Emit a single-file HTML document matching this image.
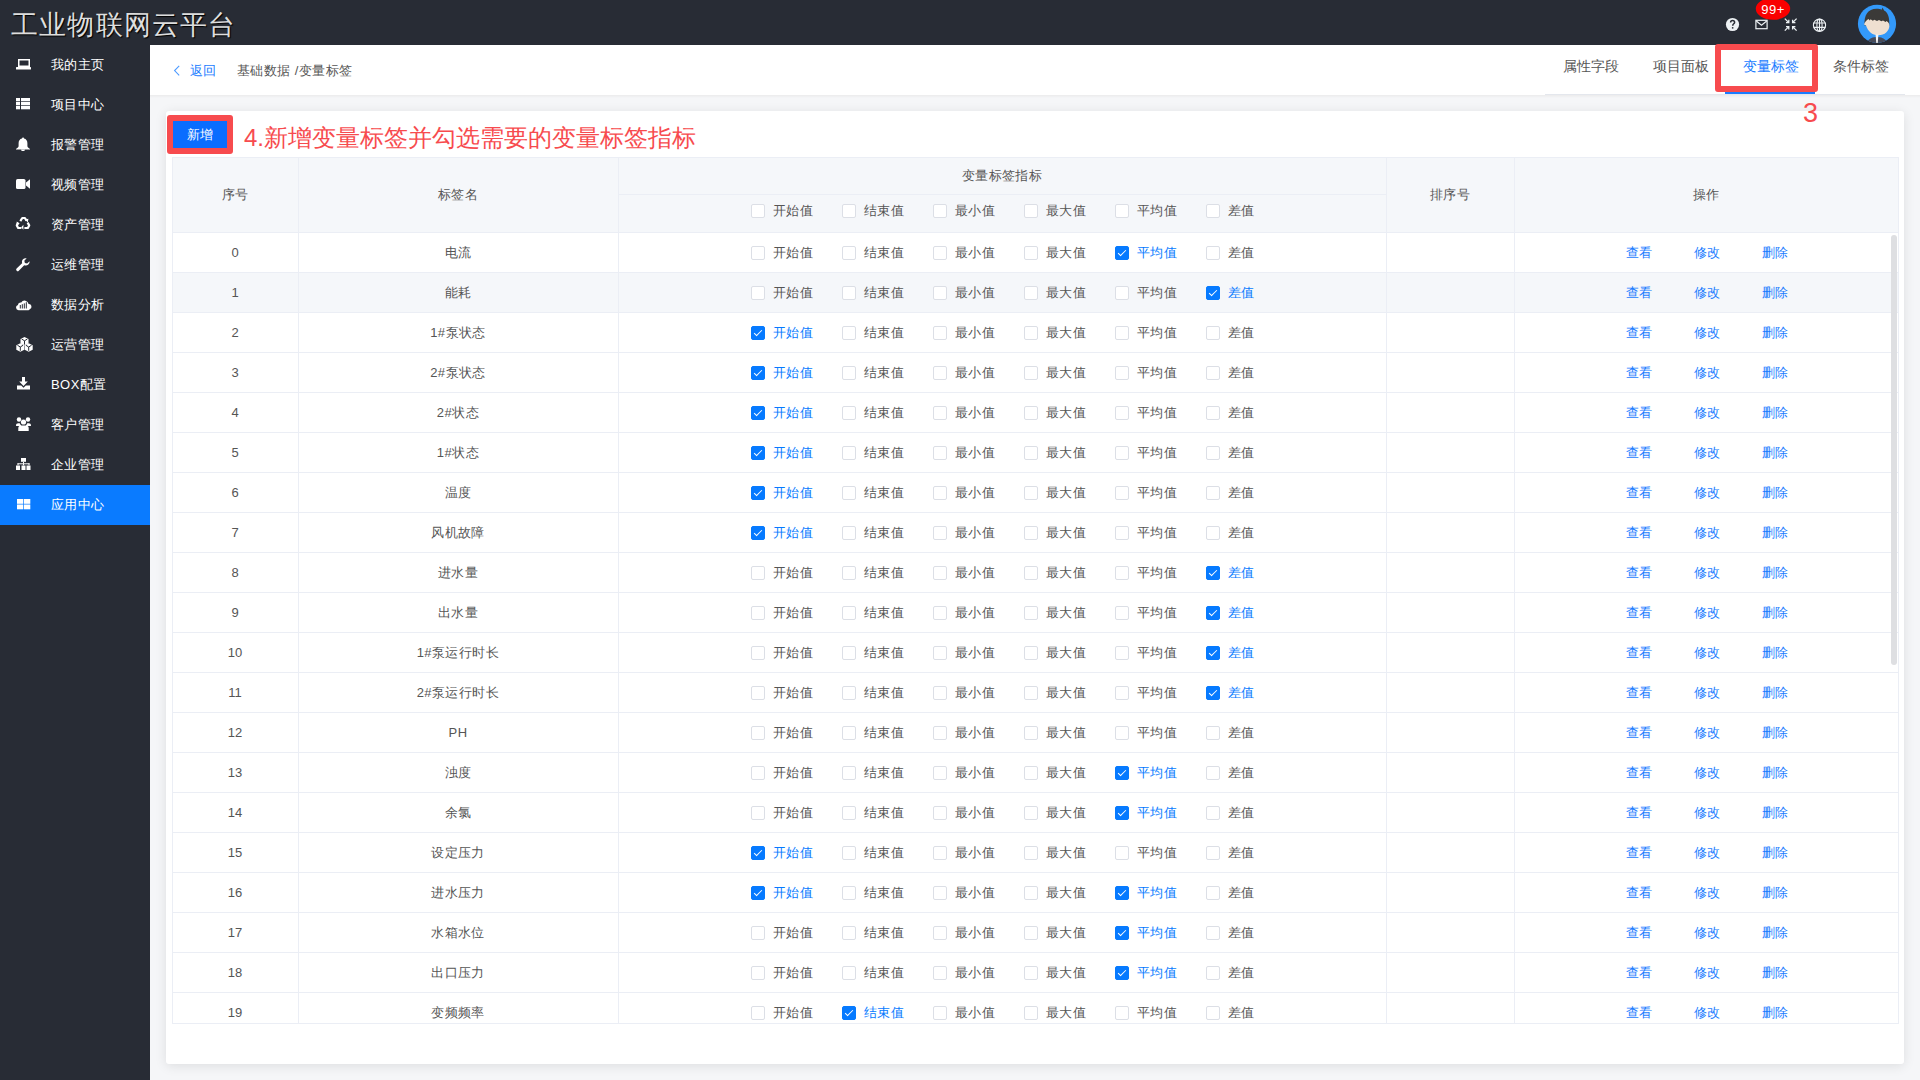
<!DOCTYPE html>
<html><head><meta charset="utf-8">
<style>
*{box-sizing:border-box;margin:0;padding:0}
html,body{width:1920px;height:1080px;overflow:hidden;background:#f5f6f8;font-family:"Liberation Sans",sans-serif;position:relative}
#top{position:absolute;left:0;top:0;width:1920px;height:45px;background:#282c35}
#title{position:absolute;left:11px;top:6px;font-family:"Liberation Serif",serif;font-size:27px;letter-spacing:1.2px;color:#dedede;line-height:38px;text-shadow:1px 1px 1px #000;white-space:nowrap}
#badge{position:absolute;left:1756px;top:2px;width:34px;line-height:16px;font-size:13px;letter-spacing:.45px;color:#fff;text-align:center}
#side{position:absolute;left:0;top:45px;width:150px;height:1035px;background:#282c35}
.mi{position:absolute;left:0;width:150px;height:40px}
.mi.act{background:#0a7bff}
.mi .mt{position:absolute;left:51px;top:0;line-height:39px;font-size:13px;letter-spacing:.45px;color:#fff;white-space:nowrap}
#hdr{position:absolute;left:150px;top:45px;width:1770px;height:50px;background:#fff}
#hdrsh{position:absolute;left:150px;top:95px;width:1770px;height:3px;background:linear-gradient(#ebebec,#f5f6f8)}
.back{position:absolute;left:190px;top:45px;line-height:51px;font-size:13px;letter-spacing:.45px;color:#1a7cff}
.crumb{position:absolute;left:237px;top:45px;line-height:51px;font-size:13px;letter-spacing:.45px;color:#555;white-space:nowrap}
.tab{position:absolute;top:45px;line-height:43px;font-size:14px;color:#555;white-space:nowrap}
.tab.on{color:#1a7cff}
#tabline{position:absolute;left:1545px;top:94px;width:360px;height:1px;background:#e4e7ed}
#tabbar{position:absolute;left:1725px;top:92px;width:90px;height:2px;background:#1a7cff}
.redbox{position:absolute;border:6px solid #f74b4e;border-radius:3px}
#card{position:absolute;left:166px;top:111px;width:1738px;height:953px;background:#fff;border-radius:3px;box-shadow:0 2px 12px rgba(0,0,0,.1)}
#btn{position:absolute;left:173px;top:121px;width:54px;height:27px;background:#0a6dff;color:#fff;font-size:13px;letter-spacing:.45px;line-height:28px;text-align:center}
#ann{position:absolute;left:244px;top:122px;line-height:32px;font-size:24px;color:#f74b4e;white-space:nowrap}
#three{position:absolute;left:1803px;top:96px;line-height:34px;font-size:27px;color:#f74b4e}
#thead{position:absolute;left:172px;top:157px;width:1726px;height:76px;background:#f5f7fa}
#clip{position:absolute;left:0;top:232px;width:1920px;height:791px;overflow:hidden}
#rows{position:absolute;left:0;top:-232px;width:1920px;height:1100px}
.row{position:absolute;left:172px;width:1726px;height:40px;border-bottom:1px solid #ebeef5;background:#fff}
.row.hov{background:#f5f7fa}
.vl{position:absolute;width:1px;background:#ebeef5}
.hl{position:absolute;height:1px;background:#ebeef5}
.th{position:absolute;font-size:13px;letter-spacing:.45px;color:#555;line-height:22px;text-align:center}
.c1{position:absolute;left:172px;width:126px;line-height:41px;font-size:13px;color:#555;text-align:center}
.c2{position:absolute;left:298px;width:320px;line-height:42px;font-size:13px;letter-spacing:.45px;color:#555;text-align:center}
.cb{position:absolute;height:14px;white-space:nowrap}
.cb i{position:absolute;left:0;top:0;width:14px;height:14px;border:1px solid #dcdfe6;border-radius:2px;background:#fff}
.cb b{position:absolute;left:22px;top:-3px;font-weight:normal;font-size:13px;letter-spacing:.45px;line-height:20px;color:#555}
.cb.on i{background:#067aff;border-color:#067aff}
.cb.on i:after{content:"";position:absolute;left:4px;top:1px;width:3px;height:7px;border:1px solid #fff;border-left:0;border-top:0;transform:rotate(45deg)}
.cb.on b{color:#067aff}
.op{position:absolute;line-height:42px;font-size:13px;letter-spacing:.45px;color:#1a7cff}
#sb{position:absolute;left:1891px;top:235px;width:6px;height:430px;border-radius:3px;background:#dedfe2}
</style></head><body>
<div id="top"></div>
<div id="title">工业物联网云平台</div>
<svg style="position:absolute;left:1700px;top:0" width="220" height="45" viewBox="1700 0 220 45">
<circle cx="1732.5" cy="24.5" r="6.6" fill="#edf1f4"/>
<path d="M1730.6 22.6c0-1.2.9-2 2-2s2 .8 2 1.8c0 1.3-1.8 1.5-1.8 2.9v.5" fill="none" stroke="#282c35" stroke-width="1.5"/>
<rect x="1731.9" y="27.1" width="1.5" height="1.5" fill="#282c35"/>
<rect x="1755.9" y="20.3" width="11.2" height="8.4" fill="none" stroke="#edf1f4" stroke-width="1.2"/>
<path d="M1756.3 21l5.2 4.2 5.2-4.2" fill="none" stroke="#edf1f4" stroke-width="1.2"/>
<g fill="none" stroke="#edf1f4" stroke-width="1.3">
<path d="M1784.8 18.6l4 4M1788.8 19.8v2.8h-2.8"/>
<path d="M1796.6 18.6l-4 4M1792.6 19.8v2.8h2.8"/>
<path d="M1784.8 30.6l4-4M1788.8 29.4v-2.8h-2.8"/>
<path d="M1796.6 30.6l-4-4M1792.6 29.4v-2.8h2.8"/>
</g>
<g fill="none" stroke="#edf1f4" stroke-width="1.1">
<circle cx="1819.5" cy="25.2" r="6.1"/>
<ellipse cx="1819.5" cy="25.2" rx="2.6" ry="6.1"/>
<path d="M1813.6 23h11.8M1813.6 27.4h11.8M1819.5 19v12.4"/>
</g>
<ellipse cx="1773" cy="8.8" rx="17.2" ry="11" fill="#f90000"/>
<defs><clipPath id="av"><circle cx="1877" cy="23.8" r="19.1"/></clipPath></defs>
<circle cx="1877" cy="23.8" r="19.1" fill="#3399fa"/>
<g clip-path="url(#av)">
<path d="M1864.6 25.5C1863.8 15 1868 9 1876.5 8.8c2.2 0 4 .4 5.2 1l.8-2.2 1.6 2.8c3.8 2 5.6 6.5 5.2 15.6z" fill="#3b3a38"/>
<path d="M1864 24.5c.8-2.8 2.6-4.6 4.4-5.6l1.4 1.6.8-1.2 2.2 1.4 1.6-1 2.6 1.2 2-.9 2.4 1.2 1.6-.7 2.6 1.4 1-.8c1.8 1.2 2.8 2.6 2.8 4.6-.3 5.3-4.6 9.5-11.1 9.5-6.3 0-10.4-4-12.3-9.7z" fill="#efdfd0"/>
<path d="M1866 44c1.6-4.5 5-6.6 9.8-7h2.4c4.8.4 8.2 2.5 9.8 7z" fill="#474a58"/>
<path d="M1875.6 34.5h2.8l-.7 9h-1.4z" fill="#f4f4f4"/>
</g>
</svg>
<div id="badge">99+</div>
<div id="side"></div>
<div class="mi" style="top:45px"><span class="mt">我的主页</span></div><div class="mi" style="top:85px"><span class="mt">项目中心</span></div><div class="mi" style="top:125px"><span class="mt">报警管理</span></div><div class="mi" style="top:165px"><span class="mt">视频管理</span></div><div class="mi" style="top:205px"><span class="mt">资产管理</span></div><div class="mi" style="top:245px"><span class="mt">运维管理</span></div><div class="mi" style="top:285px"><span class="mt">数据分析</span></div><div class="mi" style="top:325px"><span class="mt">运营管理</span></div><div class="mi" style="top:365px"><span class="mt">BOX配置</span></div><div class="mi" style="top:405px"><span class="mt">客户管理</span></div><div class="mi" style="top:445px"><span class="mt">企业管理</span></div><div class="mi act" style="top:485px"><span class="mt">应用中心</span></div>
<svg style="position:absolute;left:0;top:0" width="150" height="530" viewBox="0 0 150 530" fill="#fff">
<!-- laptop -->
<rect x="18.75" y="59.75" width="10.5" height="6.5" fill="none" stroke="#fff" stroke-width="1.5"/>
<rect x="16" y="67" width="15" height="2.5" rx="0.5"/>
<!-- th-list -->
<rect x="16" y="98" width="4" height="3.3"/><rect x="21" y="98" width="9" height="3.3"/>
<rect x="16" y="102" width="4" height="3.3"/><rect x="21" y="102" width="9" height="3.3"/>
<rect x="16" y="106" width="4" height="3.3"/><rect x="21" y="106" width="9" height="3.3"/>
<!-- bell -->
<path d="M23 137.5c.6 0 1 .4 1 .9 2.3.5 3.4 2.3 3.4 4.8v2.8c0 1 .8 1.8 2.6 2.9v.6H16v-.6c1.8-1.1 2.6-1.9 2.6-2.9v-2.8c0-2.5 1.1-4.3 3.4-4.8 0-.5.4-.9 1-.9z"/>
<path d="M21 149.5h4c0 1-.9 1.6-2 1.6s-2-.6-2-1.6z"/>
<!-- video -->
<rect x="16" y="179" width="9.5" height="10" rx="1.6"/>
<path d="M26 182.5l4-3.3v9.6l-4-3.3z"/>
<!-- recycle -->
<g fill="none" stroke="#fff" stroke-width="2.2" stroke-linejoin="round">
<path d="M20.3 221.2l2-3.2h2.6l1.6 2.6"/>
<path d="M27.6 222.6l1.6 2.8-1.4 2.6h-3.4"/>
<path d="M21.4 228h-3.2l-1.4-2.6 1.6-2.8"/>
</g>
<path d="M25 219.4l3.4-.6-.6 3.6zM23.4 229.8l-2.2-2.6 2.2-2.4zM16.8 221.4l2.8 2.4-3.3 1z" fill="#fff"/>
<!-- wrench -->
<path d="M29.6 261.2l-2.5 2.4-2.2-.6-.6-2.2 2.4-2.5a3.8 3.8 0 0 0-4.6 4.9l-5.5 5.4a1.5 1.5 0 0 0 2.2 2.1l5.4-5.5a3.8 3.8 0 0 0 5.4-4z"/>
<!-- cloud with bars -->
<path d="M18.6 310.2a2.7 2.7 0 0 1-.6-5.3 2.6 2.6 0 0 1 3.2-2.4 4 4 0 0 1 7.4 1.5 2.7 2.7 0 0 1 1.2 5.2 2.5 2.5 0 0 1-1.2 1z"/>
<g fill="#282c35"><rect x="19.8" y="305" width="1" height="3.5"/><rect x="21.8" y="304.2" width="1" height="4.3"/><rect x="23.8" y="303.4" width="1" height="5.1"/><rect x="25.8" y="302.2" width="1" height="6.3"/></g>
<!-- cubes -->
<polygon points="24.50,337.00 28.50,339.00 28.50,343.60 24.50,345.60 20.50,343.60 20.50,339.00"/><path d="M21.60 339.00L24.50 340.80L27.40 339.00M24.50 340.80V344.60" fill="none" stroke="#282c35" stroke-width="1"/><polygon points="20.30,343.20 24.30,345.20 24.30,349.80 20.30,351.80 16.30,349.80 16.30,345.20"/><path d="M17.40 345.20L20.30 347.00L23.20 345.20M20.30 347.00V350.80" fill="none" stroke="#282c35" stroke-width="1"/><polygon points="28.70,343.20 32.70,345.20 32.70,349.80 28.70,351.80 24.70,349.80 24.70,345.20"/><path d="M25.80 345.20L28.70 347.00L31.60 345.20M28.70 347.00V350.80" fill="none" stroke="#282c35" stroke-width="1"/>
<!-- download -->
<path d="M22 377h3v4.5h2.8L23.5 386l-4.3-4.5H22z"/>
<path d="M17 385.5h4.2l2.3 2.3 2.3-2.3H30v4H17z"/>
<!-- users -->
<circle cx="19" cy="419.5" r="2.2"/><circle cx="28" cy="419.5" r="2.2"/>
<circle cx="23.5" cy="422" r="2.6"/>
<path d="M16 425.5c0-1.4.9-2.2 2.2-2.2h1.6c.3 1 .8 1.6 1.3 2v.8h-5z"/>
<path d="M31 425.5c0-1.4-.9-2.2-2.2-2.2h-1.6c-.3 1-.8 1.6-1.3 2v.8h5z"/>
<path d="M18.3 431v-3c0-1.6 1-2.6 2.6-2.6h5.2c1.6 0 2.6 1 2.6 2.6v3z"/>
<!-- sitemap -->
<rect x="21" y="458" width="5" height="3.8"/>
<rect x="23" y="461.8" width="1" height="1.6"/>
<rect x="17.5" y="463.3" width="12" height="1"/>
<rect x="17.5" y="463.3" width="1" height="2"/><rect x="23" y="463.3" width="1" height="2"/><rect x="28.5" y="463.3" width="1" height="2"/>
<rect x="16" y="465.5" width="4" height="4.5"/><rect x="21.5" y="465.5" width="4" height="4.5"/><rect x="26.5" y="465.5" width="4" height="4.5"/>
<!-- th-large -->
<rect x="17" y="499" width="6.3" height="4.8"/><rect x="24" y="499" width="6.3" height="4.8"/>
<rect x="17" y="504.5" width="6.3" height="4.8"/><rect x="24" y="504.5" width="6.3" height="4.8"/>
</svg>
<div id="hdr"></div>
<div id="hdrsh"></div>
<svg style="position:absolute;left:172px;top:64px" width="10" height="13" viewBox="0 0 10 13"><path d="M7.2 1.8L2.6 6.6l4.6 4.8" fill="none" stroke="#4c9aff" stroke-width="1.1"/></svg>
<div class="back">返回</div>
<div class="crumb">基础数据 /变量标签</div>
<div class="tab" style="left:1563px">属性字段</div>
<div class="tab" style="left:1653px">项目面板</div>
<div class="tab on" style="left:1743px">变量标签</div>
<div class="tab" style="left:1833px">条件标签</div>
<div id="tabline"></div>
<div id="tabbar"></div>
<div class="redbox" style="left:1715px;top:44px;width:103px;height:48px"></div>
<div id="card"></div>
<div class="redbox" style="left:167px;top:115px;width:66px;height:39px;border-radius:3px"></div>
<div id="btn">新增</div>
<div id="ann">4.新增变量标签并勾选需要的变量标签指标</div>
<div id="three">3</div>
<div id="thead"></div>
<div id="clip"><div id="rows">
<div class="row" style="top:233px"></div><span class="c1" style="top:232px">0</span><span class="c2" style="top:232px">电流</span><span class="cb" style="left:751px;top:246px"><i></i><b>开始值</b></span><span class="cb" style="left:842px;top:246px"><i></i><b>结束值</b></span><span class="cb" style="left:933px;top:246px"><i></i><b>最小值</b></span><span class="cb" style="left:1024px;top:246px"><i></i><b>最大值</b></span><span class="cb on" style="left:1115px;top:246px"><i></i><b>平均值</b></span><span class="cb" style="left:1206px;top:246px"><i></i><b>差值</b></span><span class="op" style="top:232px;left:1626px">查看</span><span class="op" style="top:232px;left:1694px">修改</span><span class="op" style="top:232px;left:1762px">删除</span><div class="row hov" style="top:273px"></div><span class="c1" style="top:272px">1</span><span class="c2" style="top:272px">能耗</span><span class="cb" style="left:751px;top:286px"><i></i><b>开始值</b></span><span class="cb" style="left:842px;top:286px"><i></i><b>结束值</b></span><span class="cb" style="left:933px;top:286px"><i></i><b>最小值</b></span><span class="cb" style="left:1024px;top:286px"><i></i><b>最大值</b></span><span class="cb" style="left:1115px;top:286px"><i></i><b>平均值</b></span><span class="cb on" style="left:1206px;top:286px"><i></i><b>差值</b></span><span class="op" style="top:272px;left:1626px">查看</span><span class="op" style="top:272px;left:1694px">修改</span><span class="op" style="top:272px;left:1762px">删除</span><div class="row" style="top:313px"></div><span class="c1" style="top:312px">2</span><span class="c2" style="top:312px">1#泵状态</span><span class="cb on" style="left:751px;top:326px"><i></i><b>开始值</b></span><span class="cb" style="left:842px;top:326px"><i></i><b>结束值</b></span><span class="cb" style="left:933px;top:326px"><i></i><b>最小值</b></span><span class="cb" style="left:1024px;top:326px"><i></i><b>最大值</b></span><span class="cb" style="left:1115px;top:326px"><i></i><b>平均值</b></span><span class="cb" style="left:1206px;top:326px"><i></i><b>差值</b></span><span class="op" style="top:312px;left:1626px">查看</span><span class="op" style="top:312px;left:1694px">修改</span><span class="op" style="top:312px;left:1762px">删除</span><div class="row" style="top:353px"></div><span class="c1" style="top:352px">3</span><span class="c2" style="top:352px">2#泵状态</span><span class="cb on" style="left:751px;top:366px"><i></i><b>开始值</b></span><span class="cb" style="left:842px;top:366px"><i></i><b>结束值</b></span><span class="cb" style="left:933px;top:366px"><i></i><b>最小值</b></span><span class="cb" style="left:1024px;top:366px"><i></i><b>最大值</b></span><span class="cb" style="left:1115px;top:366px"><i></i><b>平均值</b></span><span class="cb" style="left:1206px;top:366px"><i></i><b>差值</b></span><span class="op" style="top:352px;left:1626px">查看</span><span class="op" style="top:352px;left:1694px">修改</span><span class="op" style="top:352px;left:1762px">删除</span><div class="row" style="top:393px"></div><span class="c1" style="top:392px">4</span><span class="c2" style="top:392px">2#状态</span><span class="cb on" style="left:751px;top:406px"><i></i><b>开始值</b></span><span class="cb" style="left:842px;top:406px"><i></i><b>结束值</b></span><span class="cb" style="left:933px;top:406px"><i></i><b>最小值</b></span><span class="cb" style="left:1024px;top:406px"><i></i><b>最大值</b></span><span class="cb" style="left:1115px;top:406px"><i></i><b>平均值</b></span><span class="cb" style="left:1206px;top:406px"><i></i><b>差值</b></span><span class="op" style="top:392px;left:1626px">查看</span><span class="op" style="top:392px;left:1694px">修改</span><span class="op" style="top:392px;left:1762px">删除</span><div class="row" style="top:433px"></div><span class="c1" style="top:432px">5</span><span class="c2" style="top:432px">1#状态</span><span class="cb on" style="left:751px;top:446px"><i></i><b>开始值</b></span><span class="cb" style="left:842px;top:446px"><i></i><b>结束值</b></span><span class="cb" style="left:933px;top:446px"><i></i><b>最小值</b></span><span class="cb" style="left:1024px;top:446px"><i></i><b>最大值</b></span><span class="cb" style="left:1115px;top:446px"><i></i><b>平均值</b></span><span class="cb" style="left:1206px;top:446px"><i></i><b>差值</b></span><span class="op" style="top:432px;left:1626px">查看</span><span class="op" style="top:432px;left:1694px">修改</span><span class="op" style="top:432px;left:1762px">删除</span><div class="row" style="top:473px"></div><span class="c1" style="top:472px">6</span><span class="c2" style="top:472px">温度</span><span class="cb on" style="left:751px;top:486px"><i></i><b>开始值</b></span><span class="cb" style="left:842px;top:486px"><i></i><b>结束值</b></span><span class="cb" style="left:933px;top:486px"><i></i><b>最小值</b></span><span class="cb" style="left:1024px;top:486px"><i></i><b>最大值</b></span><span class="cb" style="left:1115px;top:486px"><i></i><b>平均值</b></span><span class="cb" style="left:1206px;top:486px"><i></i><b>差值</b></span><span class="op" style="top:472px;left:1626px">查看</span><span class="op" style="top:472px;left:1694px">修改</span><span class="op" style="top:472px;left:1762px">删除</span><div class="row" style="top:513px"></div><span class="c1" style="top:512px">7</span><span class="c2" style="top:512px">风机故障</span><span class="cb on" style="left:751px;top:526px"><i></i><b>开始值</b></span><span class="cb" style="left:842px;top:526px"><i></i><b>结束值</b></span><span class="cb" style="left:933px;top:526px"><i></i><b>最小值</b></span><span class="cb" style="left:1024px;top:526px"><i></i><b>最大值</b></span><span class="cb" style="left:1115px;top:526px"><i></i><b>平均值</b></span><span class="cb" style="left:1206px;top:526px"><i></i><b>差值</b></span><span class="op" style="top:512px;left:1626px">查看</span><span class="op" style="top:512px;left:1694px">修改</span><span class="op" style="top:512px;left:1762px">删除</span><div class="row" style="top:553px"></div><span class="c1" style="top:552px">8</span><span class="c2" style="top:552px">进水量</span><span class="cb" style="left:751px;top:566px"><i></i><b>开始值</b></span><span class="cb" style="left:842px;top:566px"><i></i><b>结束值</b></span><span class="cb" style="left:933px;top:566px"><i></i><b>最小值</b></span><span class="cb" style="left:1024px;top:566px"><i></i><b>最大值</b></span><span class="cb" style="left:1115px;top:566px"><i></i><b>平均值</b></span><span class="cb on" style="left:1206px;top:566px"><i></i><b>差值</b></span><span class="op" style="top:552px;left:1626px">查看</span><span class="op" style="top:552px;left:1694px">修改</span><span class="op" style="top:552px;left:1762px">删除</span><div class="row" style="top:593px"></div><span class="c1" style="top:592px">9</span><span class="c2" style="top:592px">出水量</span><span class="cb" style="left:751px;top:606px"><i></i><b>开始值</b></span><span class="cb" style="left:842px;top:606px"><i></i><b>结束值</b></span><span class="cb" style="left:933px;top:606px"><i></i><b>最小值</b></span><span class="cb" style="left:1024px;top:606px"><i></i><b>最大值</b></span><span class="cb" style="left:1115px;top:606px"><i></i><b>平均值</b></span><span class="cb on" style="left:1206px;top:606px"><i></i><b>差值</b></span><span class="op" style="top:592px;left:1626px">查看</span><span class="op" style="top:592px;left:1694px">修改</span><span class="op" style="top:592px;left:1762px">删除</span><div class="row" style="top:633px"></div><span class="c1" style="top:632px">10</span><span class="c2" style="top:632px">1#泵运行时长</span><span class="cb" style="left:751px;top:646px"><i></i><b>开始值</b></span><span class="cb" style="left:842px;top:646px"><i></i><b>结束值</b></span><span class="cb" style="left:933px;top:646px"><i></i><b>最小值</b></span><span class="cb" style="left:1024px;top:646px"><i></i><b>最大值</b></span><span class="cb" style="left:1115px;top:646px"><i></i><b>平均值</b></span><span class="cb on" style="left:1206px;top:646px"><i></i><b>差值</b></span><span class="op" style="top:632px;left:1626px">查看</span><span class="op" style="top:632px;left:1694px">修改</span><span class="op" style="top:632px;left:1762px">删除</span><div class="row" style="top:673px"></div><span class="c1" style="top:672px">11</span><span class="c2" style="top:672px">2#泵运行时长</span><span class="cb" style="left:751px;top:686px"><i></i><b>开始值</b></span><span class="cb" style="left:842px;top:686px"><i></i><b>结束值</b></span><span class="cb" style="left:933px;top:686px"><i></i><b>最小值</b></span><span class="cb" style="left:1024px;top:686px"><i></i><b>最大值</b></span><span class="cb" style="left:1115px;top:686px"><i></i><b>平均值</b></span><span class="cb on" style="left:1206px;top:686px"><i></i><b>差值</b></span><span class="op" style="top:672px;left:1626px">查看</span><span class="op" style="top:672px;left:1694px">修改</span><span class="op" style="top:672px;left:1762px">删除</span><div class="row" style="top:713px"></div><span class="c1" style="top:712px">12</span><span class="c2" style="top:712px">PH</span><span class="cb" style="left:751px;top:726px"><i></i><b>开始值</b></span><span class="cb" style="left:842px;top:726px"><i></i><b>结束值</b></span><span class="cb" style="left:933px;top:726px"><i></i><b>最小值</b></span><span class="cb" style="left:1024px;top:726px"><i></i><b>最大值</b></span><span class="cb" style="left:1115px;top:726px"><i></i><b>平均值</b></span><span class="cb" style="left:1206px;top:726px"><i></i><b>差值</b></span><span class="op" style="top:712px;left:1626px">查看</span><span class="op" style="top:712px;left:1694px">修改</span><span class="op" style="top:712px;left:1762px">删除</span><div class="row" style="top:753px"></div><span class="c1" style="top:752px">13</span><span class="c2" style="top:752px">浊度</span><span class="cb" style="left:751px;top:766px"><i></i><b>开始值</b></span><span class="cb" style="left:842px;top:766px"><i></i><b>结束值</b></span><span class="cb" style="left:933px;top:766px"><i></i><b>最小值</b></span><span class="cb" style="left:1024px;top:766px"><i></i><b>最大值</b></span><span class="cb on" style="left:1115px;top:766px"><i></i><b>平均值</b></span><span class="cb" style="left:1206px;top:766px"><i></i><b>差值</b></span><span class="op" style="top:752px;left:1626px">查看</span><span class="op" style="top:752px;left:1694px">修改</span><span class="op" style="top:752px;left:1762px">删除</span><div class="row" style="top:793px"></div><span class="c1" style="top:792px">14</span><span class="c2" style="top:792px">余氯</span><span class="cb" style="left:751px;top:806px"><i></i><b>开始值</b></span><span class="cb" style="left:842px;top:806px"><i></i><b>结束值</b></span><span class="cb" style="left:933px;top:806px"><i></i><b>最小值</b></span><span class="cb" style="left:1024px;top:806px"><i></i><b>最大值</b></span><span class="cb on" style="left:1115px;top:806px"><i></i><b>平均值</b></span><span class="cb" style="left:1206px;top:806px"><i></i><b>差值</b></span><span class="op" style="top:792px;left:1626px">查看</span><span class="op" style="top:792px;left:1694px">修改</span><span class="op" style="top:792px;left:1762px">删除</span><div class="row" style="top:833px"></div><span class="c1" style="top:832px">15</span><span class="c2" style="top:832px">设定压力</span><span class="cb on" style="left:751px;top:846px"><i></i><b>开始值</b></span><span class="cb" style="left:842px;top:846px"><i></i><b>结束值</b></span><span class="cb" style="left:933px;top:846px"><i></i><b>最小值</b></span><span class="cb" style="left:1024px;top:846px"><i></i><b>最大值</b></span><span class="cb" style="left:1115px;top:846px"><i></i><b>平均值</b></span><span class="cb" style="left:1206px;top:846px"><i></i><b>差值</b></span><span class="op" style="top:832px;left:1626px">查看</span><span class="op" style="top:832px;left:1694px">修改</span><span class="op" style="top:832px;left:1762px">删除</span><div class="row" style="top:873px"></div><span class="c1" style="top:872px">16</span><span class="c2" style="top:872px">进水压力</span><span class="cb on" style="left:751px;top:886px"><i></i><b>开始值</b></span><span class="cb" style="left:842px;top:886px"><i></i><b>结束值</b></span><span class="cb" style="left:933px;top:886px"><i></i><b>最小值</b></span><span class="cb" style="left:1024px;top:886px"><i></i><b>最大值</b></span><span class="cb on" style="left:1115px;top:886px"><i></i><b>平均值</b></span><span class="cb" style="left:1206px;top:886px"><i></i><b>差值</b></span><span class="op" style="top:872px;left:1626px">查看</span><span class="op" style="top:872px;left:1694px">修改</span><span class="op" style="top:872px;left:1762px">删除</span><div class="row" style="top:913px"></div><span class="c1" style="top:912px">17</span><span class="c2" style="top:912px">水箱水位</span><span class="cb" style="left:751px;top:926px"><i></i><b>开始值</b></span><span class="cb" style="left:842px;top:926px"><i></i><b>结束值</b></span><span class="cb" style="left:933px;top:926px"><i></i><b>最小值</b></span><span class="cb" style="left:1024px;top:926px"><i></i><b>最大值</b></span><span class="cb on" style="left:1115px;top:926px"><i></i><b>平均值</b></span><span class="cb" style="left:1206px;top:926px"><i></i><b>差值</b></span><span class="op" style="top:912px;left:1626px">查看</span><span class="op" style="top:912px;left:1694px">修改</span><span class="op" style="top:912px;left:1762px">删除</span><div class="row" style="top:953px"></div><span class="c1" style="top:952px">18</span><span class="c2" style="top:952px">出口压力</span><span class="cb" style="left:751px;top:966px"><i></i><b>开始值</b></span><span class="cb" style="left:842px;top:966px"><i></i><b>结束值</b></span><span class="cb" style="left:933px;top:966px"><i></i><b>最小值</b></span><span class="cb" style="left:1024px;top:966px"><i></i><b>最大值</b></span><span class="cb on" style="left:1115px;top:966px"><i></i><b>平均值</b></span><span class="cb" style="left:1206px;top:966px"><i></i><b>差值</b></span><span class="op" style="top:952px;left:1626px">查看</span><span class="op" style="top:952px;left:1694px">修改</span><span class="op" style="top:952px;left:1762px">删除</span><div class="row" style="top:993px"></div><span class="c1" style="top:992px">19</span><span class="c2" style="top:992px">变频频率</span><span class="cb" style="left:751px;top:1006px"><i></i><b>开始值</b></span><span class="cb on" style="left:842px;top:1006px"><i></i><b>结束值</b></span><span class="cb" style="left:933px;top:1006px"><i></i><b>最小值</b></span><span class="cb" style="left:1024px;top:1006px"><i></i><b>最大值</b></span><span class="cb" style="left:1115px;top:1006px"><i></i><b>平均值</b></span><span class="cb" style="left:1206px;top:1006px"><i></i><b>差值</b></span><span class="op" style="top:992px;left:1626px">查看</span><span class="op" style="top:992px;left:1694px">修改</span><span class="op" style="top:992px;left:1762px">删除</span>
</div></div>
<div class="hl" style="left:618px;top:194px;width:768px"></div>
<div class="hl" style="left:172px;top:232px;width:1726px"></div>
<div class="hl" style="left:172px;top:157px;width:1726px"></div>
<div class="vl" style="left:172px;top:157px;height:866px"></div>
<div class="vl" style="left:298px;top:157px;height:866px"></div>
<div class="vl" style="left:618px;top:157px;height:866px"></div>
<div class="vl" style="left:1386px;top:157px;height:866px"></div>
<div class="vl" style="left:1514px;top:157px;height:866px"></div>
<div class="vl" style="left:1898px;top:157px;height:866px"></div>
<div class="hl" style="left:172px;top:1023px;width:1727px"></div>
<div class="th" style="left:172px;top:184px;width:126px">序号</div>
<div class="th" style="left:298px;top:184px;width:320px">标签名</div>
<div class="th" style="left:618px;top:165px;width:768px">变量标签指标</div>
<span class="cb" style="left:751px;top:204px"><i></i><b>开始值</b></span><span class="cb" style="left:842px;top:204px"><i></i><b>结束值</b></span><span class="cb" style="left:933px;top:204px"><i></i><b>最小值</b></span><span class="cb" style="left:1024px;top:204px"><i></i><b>最大值</b></span><span class="cb" style="left:1115px;top:204px"><i></i><b>平均值</b></span><span class="cb" style="left:1206px;top:204px"><i></i><b>差值</b></span>
<div class="th" style="left:1386px;top:184px;width:128px">排序号</div>
<div class="th" style="left:1514px;top:184px;width:384px">操作</div>
<div id="sb"></div>
</body></html>
